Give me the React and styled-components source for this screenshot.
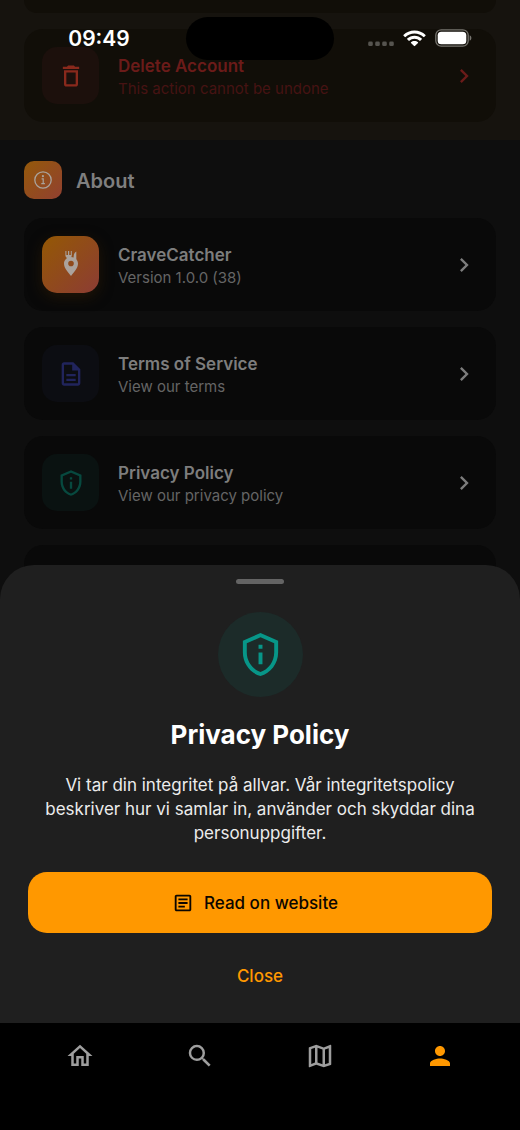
import React from "react";
import styled, { createGlobalStyle } from "styled-components";
import {
  MdDeleteOutline,
  MdChevronRight,
  MdOutlineDescription,
  MdOutlinePrivacyTip,
  MdOutlineArticle,
  MdOutlineHome,
  MdSearch,
  MdOutlineMap,
  MdPerson,
} from "react-icons/md";

const GlobalStyle = createGlobalStyle`
  * { box-sizing: border-box; }
  body {
    margin: 0;
    background: #000;
    font-family: Inter, "Liberation Sans", sans-serif;
    -webkit-font-smoothing: antialiased;
  }
  button { font-family: inherit; border: 0; background: none; padding: 0; cursor: pointer; }
  svg { display: block; flex: none; }
`;

const Screen = styled.div`
  position: relative;
  min-height: 100vh;
  display: flex;
  flex-direction: column;
`;

const Content = styled.main`
  position: relative;
  flex: 1 0 0;
  min-height: 720px;
  overflow: hidden;
  background: #0e0e0e;
`;

/* Status bar floats over the scrolled page */
const StatusBar = styled.header`
  position: absolute;
  z-index: 3;
  inset: 0 0 auto;
  height: 76px;
  padding: 0 48px;
  display: grid;
  grid-template-columns: 1fr 148px 1fr;
  align-items: center;
`;

const Time = styled.time`
  width: 102px;
  padding-top: 2px;
  text-align: center;
  font-size: 21px;
  line-height: 24px;
  font-weight: 600;
  color: #fff;
`;

const Island = styled.div`
  height: 43px;
  border-radius: 22px;
  background: #000;
`;

const StatusIcons = styled.div`
  display: flex;
  align-items: center;
  justify-content: flex-end;
  gap: 9px;
`;

const DangerZone = styled.section`
  padding: 0 24px 18px;
  display: flex;
  flex-direction: column;
  gap: 16px;
  background: #16130e;
`;

const PreviousCard = styled.div`
  height: 13px;
  border-radius: 0 0 19px 19px;
  background: #110e08;
`;

const About = styled.section`
  padding: 21px 24px 0;
`;

const SectionHeader = styled.div`
  display: flex;
  align-items: center;
  gap: 14px;
  margin-bottom: 19px;
`;

const SectionBadge = styled.span`
  width: 38px;
  height: 38px;
  border-radius: 10px;
  display: grid;
  place-items: center;
  color: #aaa39c;
  background: linear-gradient(135deg, #94590a, #914030);
`;

const SectionTitle = styled.h2`
  margin: 0;
  padding-top: 2px;
  font-size: 20px;
  line-height: 24px;
  font-weight: 600;
  color: #7f7f7f;
`;

const Rows = styled.div`
  display: flex;
  flex-direction: column;
  gap: 16px;
`;

const Row = styled.button`
  width: 100%;
  min-height: 93px;
  padding: 18px;
  display: flex;
  align-items: center;
  gap: 19px;
  text-align: left;
  border-radius: 19px;
  color: ${(p) => (p.$danger ? "#6b1b19" : "#7d7d7d")};
  background: ${(p) => (p.$danger ? "#110e08" : "#090909")};
`;

const Tile = styled.span`
  width: 57px;
  height: 57px;
  flex: none;
  border-radius: 15px;
  display: grid;
  place-items: center;
  color: ${(p) => p.$color};
  background: ${(p) => p.$background};
  box-shadow: ${(p) => p.$glow || "none"};
`;

const RowText = styled.span`
  flex: 1;
  min-width: 0;
  padding-top: 2px;
  display: flex;
  flex-direction: column;
  gap: 2px;
`;

const RowTitle = styled.span`
  font-size: 17px;
  line-height: 22px;
  font-weight: 600;
`;

const RowSubtitle = styled.span`
  font-size: 15px;
  line-height: 20px;
  color: ${(p) => (p.$danger ? "#461313" : "#656565")};
`;

const Sheet = styled.section`
  position: absolute;
  z-index: 2;
  inset: auto 0 0;
  padding: 14px 28px 22px;
  display: flex;
  flex-direction: column;
  align-items: center;
  border-radius: 34px 34px 0 0;
  background: #1f1f1f;
`;

const Handle = styled.span`
  width: 48px;
  height: 5px;
  border-radius: 3px;
  background: #646464;
`;

const Emblem = styled.span`
  width: 85px;
  height: 85px;
  margin-top: 28px;
  border-radius: 50%;
  display: grid;
  place-items: center;
  color: #079688;
  background: #1c2b29;
`;

const SheetTitle = styled.h1`
  margin: 20px 0;
  font-size: 26px;
  line-height: 36px;
  font-weight: 700;
  color: #fff;
`;

const SheetText = styled.p`
  margin: 0 0 27px;
  text-align: center;
  font-size: 17px;
  line-height: 24px;
  color: #ececec;
`;

const PrimaryButton = styled.button`
  align-self: stretch;
  height: 61px;
  padding: 0 32px 0 22px;
  display: flex;
  align-items: center;
  justify-content: center;
  gap: 10px;
  border-radius: 19px;
  font-size: 17px;
  font-weight: 500;
  color: #0b0600;
  background: #ff9800;
`;

const TextButton = styled.button`
  height: 50px;
  margin-top: 18px;
  padding: 0 20px;
  font-size: 17px;
  font-weight: 500;
  color: #ff9800;
`;

const NavBar = styled.nav`
  height: 107px;
  padding: 18px 20px 0;
  display: grid;
  grid-template-columns: repeat(4, 1fr);
  align-items: start;
  background: #000;
`;

const NavButton = styled.button`
  height: 30px;
  display: grid;
  place-items: center;
  color: ${(p) => (p.$active ? "#ff9800" : "#9e9e9e")};
`;

const SignalDots = () => (
  <svg width="26" height="17" viewBox="0 0 26 17" fill="#56544f" aria-hidden="true">
    {[0, 7, 14, 21].map((x) => (
      <rect key={x} x={x + 0.2} y="11.500" width="4.600" height="4.600" rx="1.400" />
    ))}
  </svg>
);

const WifiIcon = () => (
  <svg width="23" height="17" viewBox="0 0 23 17" fill="#fff" aria-hidden="true">
    <path d="M11.5 0.4C7.2 0.4 3.3 2.1 0.4 4.9c-.2.2-.2.5 0 .7l1.5 1.5c.2.2.5.2.7 0 2.3-2.2 5.4-3.5 8.9-3.5s6.600 1.300 8.900 3.500c.2.2.5.2.7 0l1.500-1.500c.2-.2.2-.5 0-.7C19.700 2.100 15.800.4 11.500.4z" />
    <path d="M11.500 5.700c-2.800 0-5.400 1.100-7.300 2.900-.2.2-.2.5 0 .7l1.500 1.500c.2.2.5.2.7 0 1.300-1.200 3.100-2 5.100-2s3.800.8 5.100 2c.2.2.5.2.7 0l1.500-1.500c.2-.2.2-.5 0-.7-1.900-1.800-4.500-2.900-7.300-2.900z" />
    <path d="M11.500 11c-1.400 0-2.600.5-3.500 1.300-.2.2-.2.5 0 .7l3.100 3.100c.2.2.6.2.8 0L15 13c.2-.2.2-.5 0-.7-.9-.8-2.100-1.300-3.500-1.300z" />
  </svg>
);

const BatteryIcon = () => (
  <svg width="37" height="18" viewBox="0 0 37 18" aria-hidden="true">
    <rect x="0.8" y="0.8" width="32.400" height="16.400" rx="5.400" fill="none" stroke="#77756f" strokeWidth="1.300" />
    <rect x="2.700" y="2.700" width="28.600" height="12.600" rx="3.600" fill="#fff" />
    <path d="M34.700 6.300v5.400c1-.4 1.700-1.500 1.700-2.700s-.7-2.300-1.700-2.700z" fill="#77756f" />
  </svg>
);

const InfoIcon = () => (
  <svg width="20" height="20" viewBox="0 0 20 20" fill="none" stroke="currentColor" aria-hidden="true">
    <circle cx="10" cy="10" r="8.200" strokeWidth="1.300" />
    <path d="M8.600 8.800h1.600v4.800M8.300 13.700h3.600" strokeWidth="1.200" />
    <circle cx="9.900" cy="6.200" r="1.100" fill="currentColor" stroke="none" />
  </svg>
);

const CraveLogo = () => (
  <svg width="28" height="28" viewBox="0 0 28 28" fill="#aba39d" aria-hidden="true">
    <path fillRule="evenodd" d="M14 6c-4 0-7 2.900-7 6.700 0 4.300 4 8.300 7 12.300 3-4 7-8 7-12.300C21 8.900 18 6 14 6zm0 3.700a2.800 2.800 0 1 1 0 5.600 2.800 2.800 0 0 1 0-5.600z" />
    <path d="M8.400 0v4.200c0 1.500.8 2.500 2 2.900h2.400c1.200-.4 2-1.400 2-2.900V0h-1v4h-1.600V0H11v4H9.400V0z" />
    <path d="M19.300.6c-1.700.8-2.700 3-2.700 5.200v3.700h2.700z" />
  </svg>
);

function SettingRow({ icon, title, subtitle, color, background, glow, danger }) {
  return (
    <Row type="button" $danger={danger}>
      <Tile $color={color} $background={background} $glow={glow}>{icon}</Tile>
      <RowText>
        <RowTitle>{title}</RowTitle>
        <RowSubtitle $danger={danger}>{subtitle}</RowSubtitle>
      </RowText>
      <MdChevronRight size={28} aria-hidden="true" />
    </Row>
  );
}

const aboutRows = [
  {
    title: "CraveCatcher",
    subtitle: "Version 1.0.0 (38)",
    icon: <CraveLogo />,
    background: "linear-gradient(135deg, #945804, #8c3c34)",
    glow: "0 4px 14px #211506",
  },
  {
    title: "Terms of Service",
    subtitle: "View our terms",
    icon: <MdOutlineDescription size={28} />,
    color: "#21245c",
    background: "#0c0d12",
  },
  {
    title: "Privacy Policy",
    subtitle: "View our privacy policy",
    icon: <MdOutlinePrivacyTip size={28} />,
    color: "#07493f",
    background: "#0a1211",
  },
];

const navItems = [
  { label: "Home", Icon: MdOutlineHome },
  { label: "Search", Icon: MdSearch },
  { label: "Map", Icon: MdOutlineMap },
  { label: "Profile", Icon: MdPerson, active: true },
];

export default function App() {
  return (
    <>
      <GlobalStyle />
      <Screen>
        <StatusBar>
          <Time>09:49</Time>
          <Island />
          <StatusIcons>
            <SignalDots />
            <WifiIcon />
            <BatteryIcon />
          </StatusIcons>
        </StatusBar>

        <Content>
          <DangerZone>
            <PreviousCard />
            <SettingRow
              danger
              title="Delete Account"
              subtitle="This action cannot be undone"
              icon={<MdDeleteOutline size={28} />}
              color="#89291c"
              background="#1c100c"
            />
          </DangerZone>
          <About>
            <SectionHeader>
              <SectionBadge><InfoIcon /></SectionBadge>
              <SectionTitle>About</SectionTitle>
            </SectionHeader>
            <Rows>
              {aboutRows.map((row) => <SettingRow key={row.title} {...row} />)}
              <Row type="button" aria-label="More" />
            </Rows>
          </About>

          <Sheet role="dialog" aria-labelledby="sheet-title">
            <Handle />
            <Emblem><MdOutlinePrivacyTip size={47} /></Emblem>
            <SheetTitle id="sheet-title">Privacy Policy</SheetTitle>
            <SheetText>
              Vi tar din integritet på allvar. Vår integritetspolicy beskriver hur vi samlar in, använder och skyddar dina personuppgifter.
            </SheetText>
            <PrimaryButton type="button">
              <MdOutlineArticle size={22} aria-hidden="true" />
              Read on website
            </PrimaryButton>
            <TextButton type="button">Close</TextButton>
          </Sheet>
        </Content>

        <NavBar>
          {navItems.map(({ label, Icon, active }) => (
            <NavButton key={label} type="button" aria-label={label} $active={active}>
              <Icon size={30} />
            </NavButton>
          ))}
        </NavBar>
      </Screen>
    </>
  );
}
